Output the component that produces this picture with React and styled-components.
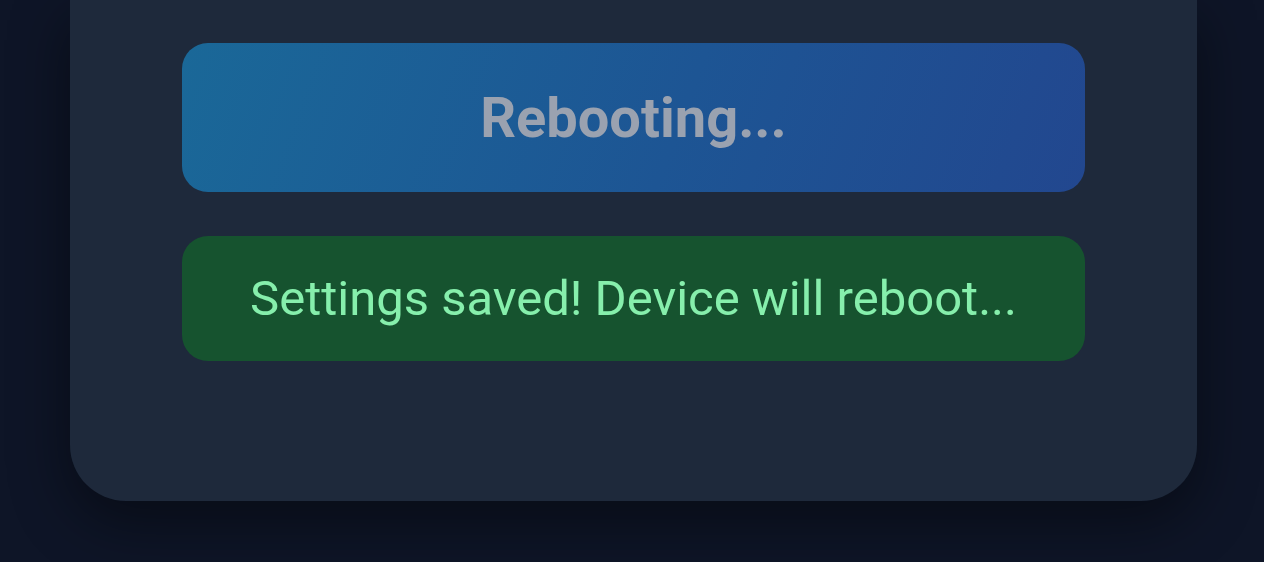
import React from 'react';
import styled, { createGlobalStyle } from 'styled-components';

const GlobalStyle = createGlobalStyle`
  html, body {
    margin: 0;
    padding: 0;
    background: #0e1527;
    font-family: 'Roboto', 'Liberation Sans', sans-serif;
  }
`

const Page = styled.div`
  width: 1264px;
  height: 562px;
  box-sizing: border-box;
  padding: 0 67px 61px 70px;
  overflow: hidden;
  display: flex;
`

const Card = styled.div`
  flex: 1;
  background: #1e293b;
  border-radius: 0 0 56px 56px;
  box-shadow: 0 20px 60px rgba(0, 0, 0, 0.45);
  padding: 43px 112px 0 112px;
  display: flex;
  flex-direction: column;
  gap: 44px;
`

const RebootButton = styled.button`
  height: 149px;
  border: none;
  border-radius: 26px;
  background: linear-gradient(110deg, #1a6898 0%, #1d5594 55%, #22478f 100%);
  color: #9aa2b0;
  font-family: 'Roboto', 'Liberation Sans', sans-serif;
  font-weight: 700;
  font-size: 56px;
  cursor: not-allowed;
`

const Message = styled.div`
  height: 125px;
  border-radius: 26px;
  background: ${p => p.success ? '#16532f' : '#7f1d1d'};
  color: ${p => p.success ? '#86efac' : '#fca5a5'};
  font-size: 49px;
  display: flex;
  align-items: center;
  justify-content: center;
`

const App = () => (
  <>
    <GlobalStyle />
    <Page>
      <Card>
        <RebootButton disabled>Rebooting...</RebootButton>
        <Message success>Settings saved! Device will reboot...</Message>
      </Card>
    </Page>
  </>
);

export default App;
